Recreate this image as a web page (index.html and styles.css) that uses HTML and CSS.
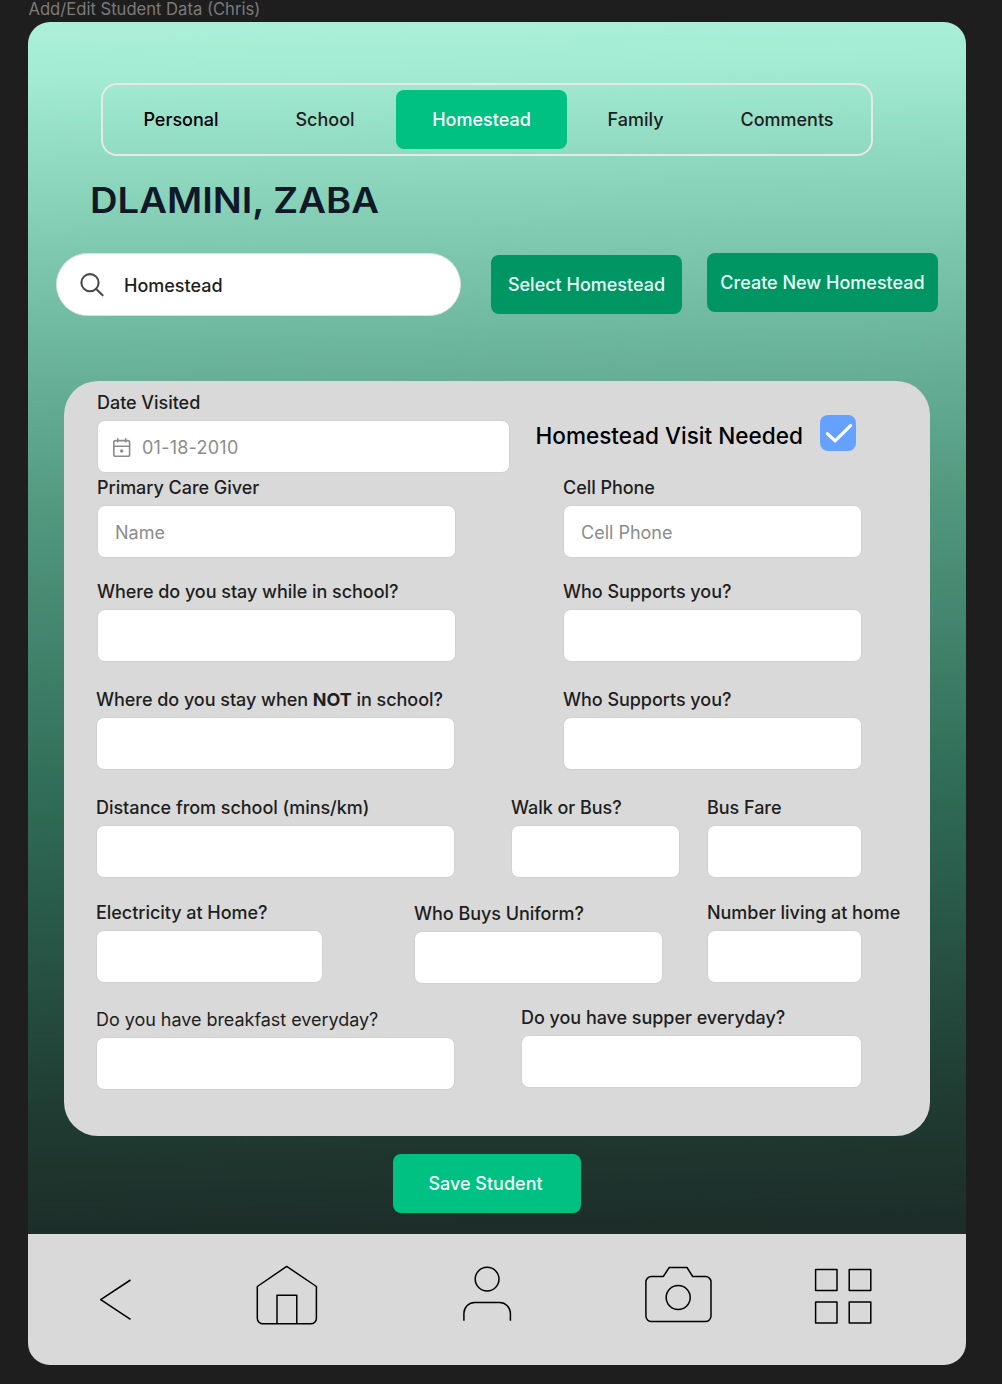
FILE: index.html
```html
<!DOCTYPE html>
<html lang="en">
<head>
<meta charset="utf-8">
<title>Add/Edit Student Data</title>
<link rel="stylesheet" href="styles.css">
</head>
<body>
<div class="frame-name"><span>Add/Edit Student Data (Chris)</span></div>
<div class="frame">
  <main class="content">
    <nav class="tabs">
      <a class="tab tab-first">Personal</a>
      <a class="tab tab-school">School</a>
      <a class="tab tab-active">Homestead</a>
      <a class="tab tab-family">Family</a>
      <a class="tab tab-comments">Comments</a>
    </nav>
    <h1 class="student"><span>DLAMINI, ZABA</span></h1>
    <div class="toolbar">
      <div class="search">
        <svg width="26" height="26" viewBox="0 0 26 26" fill="none" stroke="#4a4a4a" stroke-width="2.1" stroke-linecap="round"><circle cx="11" cy="10.7" r="8.6"/><path d="M17.2 16.9 23.6 23.3"/></svg>
        <span>Homestead</span>
      </div>
      <button class="btn btn-dark btn-select">Select Homestead</button>
      <button class="btn btn-dark btn-create">Create New Homestead</button>
    </div>
    <section class="panel">
      <div class="row row-date">
        <div class="field w-date"><label>Date Visited</label>
          <div class="input input-date">
            <svg width="20" height="22" viewBox="0 0 20 22" fill="none" stroke="#8c8c8c" stroke-width="1.6"><rect x="1.8" y="3.6" width="15.8" height="15.6" rx="1.8"/><path d="M1.8 9.3H17.6M5.8 1.2V5.6M13.7 1.2V5.6"/><circle cx="9.7" cy="14" r="1.7" fill="#8c8c8c" stroke="none"/></svg>
            <span>01-18-2010</span>
          </div>
        </div>
        <div class="visit">
          <span>Homestead Visit Needed</span>
          <div class="check"><svg width="36" height="36" viewBox="0 0 36 36" fill="none" stroke="#fff" stroke-width="3.2" stroke-linecap="round" stroke-linejoin="round"><path d="M7.4 18.6 15.1 25.9 30.6 10.6"/></svg></div>
        </div>
      </div>
      <div class="row row-giver">
        <div class="field w-wide"><label>Primary Care Giver</label><div class="input">Name</div></div>
        <div class="field w-half"><label>Cell Phone</label><div class="input">Cell Phone</div></div>
      </div>
      <div class="row row-stay">
        <div class="field w-wide"><label>Where do you stay while in school?</label><div class="input"></div></div>
        <div class="field w-half"><label>Who Supports you?</label><div class="input"></div></div>
      </div>
      <div class="row row-away">
        <div class="field w-wide"><label>Where do you stay when <b>NOT</b> in school?</label><div class="input"></div></div>
        <div class="field w-half"><label>Who Supports you?</label><div class="input"></div></div>
      </div>
      <div class="row row-travel">
        <div class="field w-wide"><label>Distance from school (mins/km)</label><div class="input"></div></div>
        <div class="field w-walk"><label>Walk or Bus?</label><div class="input"></div></div>
        <div class="field w-small"><label>Bus Fare</label><div class="input"></div></div>
      </div>
      <div class="row row-home">
        <div class="field w-power"><label>Electricity at Home?</label><div class="input"></div></div>
        <div class="field w-uniform"><label>Who Buys Uniform?</label><div class="input"></div></div>
        <div class="field w-small"><label>Number living at home</label><div class="input"></div></div>
      </div>
      <div class="row row-meals">
        <div class="field w-wide w-breakfast"><label class="light">Do you have breakfast everyday?</label><div class="input"></div></div>
        <div class="field w-supper"><label>Do you have supper everyday?</label><div class="input"></div></div>
      </div>
    </section>
    <button class="btn btn-save">Save Student</button>
  </main>
  <footer class="dock">
    <svg class="i-back" width="34" height="44" viewBox="0 0 34 44"><path d="M32.5 2 2.7 21.7 32.5 41.4"/></svg>
    <svg class="i-home" width="64" height="62" viewBox="0 0 64 62"><path d="M2.3 22.5 31.7 2.4 61.4 22.5V54.2a5.6 5.6 0 0 1-5.6 5.6H7.9a5.6 5.6 0 0 1-5.6-5.6ZM22 59.8V31.2H41.8V59.8"/></svg>
    <svg class="i-user" width="52" height="58" viewBox="0 0 52 58"><circle cx="26.1" cy="14.1" r="11.9"/><path d="M2.9 55.8V48.5A10.8 10.8 0 0 1 13.7 37.6H38.5A10.8 10.8 0 0 1 49.4 48.5V55.8"/></svg>
    <svg class="i-camera" width="70" height="60" viewBox="0 0 70 60"><path d="M7.5 11.5H19.3L25.2 2.5H43L48.7 11.5H61.4a5.6 5.6 0 0 1 5.6 5.6V51a5.6 5.6 0 0 1-5.6 5.6H7.5A5.6 5.6 0 0 1 1.9 51V17.1a5.6 5.6 0 0 1 5.6-5.6Z"/><circle cx="34.2" cy="32.5" r="12"/></svg>
    <svg class="i-grid" width="60" height="58" viewBox="0 0 60 58"><path d="M1.6 2.6H23V23.6H1.6ZM35.2 2.6H56.8V23.6H35.2ZM1.6 35H23V56H1.6ZM35.2 35H56.8V56H35.2Z"/></svg>
  </footer>
</div>
</body>
</html>
```
FILE: styles.css
```css
* { box-sizing: border-box; }
body {
  margin: 0;
  width: 1002px;
  height: 1384px;
  overflow: hidden;
  background: #1e1e1e;
  font-family: Inter, "Liberation Sans", sans-serif;
  font-size: 18px;
  color: #1e1e1e;
}
svg { display: block; flex: none; }
button { border: 0; font: inherit; padding: 0; }

.frame-name {
  height: 22px;
  padding-left: 28.5px;
  font-size: 16.6px;
  line-height: 19px;
  color: #7b7b7b;
}
.frame {
  display: flex;
  flex-direction: column;
  width: 938px;
  height: 1343px;
  margin-left: 28px;
  border-radius: 22px;
  overflow: hidden;
  background: linear-gradient(179deg, #abefd9 8px, #a4ecd4 50px, #7fcab1 222px, #64ad94 376px, #539a81 478px, #2f6b56 784px, #1f3a31 1102px, #1d2d29 1220px);
}
.content { height: 1212px; }

.tabs {
  display: flex;
  align-items: center;
  width: 772px;
  height: 73px;
  margin: 61px 0 0 73px;
  padding-left: 5px;
  gap: 6px;
  border: 2px solid #e8e8e8;
  border-radius: 16px;
  font-weight: 500;
}
.tab {
  width: 146px;
  height: 59px;
  border-radius: 8px;
  text-align: center;
  line-height: 60px;
  white-space: nowrap;
}
.tab-first { color: #000; }
.tab-school { width: 130px; }
.tab-active { width: 171px; background: #00c082; color: #fff; }
.tab-family { width: 125px; }
.tab-comments { width: 166px; }

.student {
  height: 46px;
  margin: 21px 0 0 62px;
  font-size: 35.2px;
  line-height: 46px;
  font-weight: 600;
  color: #111827;
}
.student span {
  display: inline-block;
  transform: scaleX(1.085);
  transform-origin: 0 50%;
}

.toolbar {
  display: flex;
  height: 64px;
  margin: 30px 0 0 28px;
}
.search {
  display: flex;
  align-items: center;
  width: 405px;
  height: 63px;
  padding-left: 22px;
  gap: 19px;
  border: 1px solid #dedede;
  border-radius: 32px;
  background: #fff;
  font-weight: 500;
}
.search span { padding-top: 1px; }
.btn {
  display: block;
  height: 59px;
  border-radius: 8px;
  color: #fff;
  font-weight: 500;
  line-height: 60px;
  white-space: nowrap;
}
.btn-dark { background: #009663; color: #e9fff7; }
.btn-select { width: 191px; margin: 2px 0 0 30px; padding-top: 1px; line-height: 58px; }
.btn-create { width: 231px; margin-left: 25px; }
.btn-save { width: 188px; margin: 18px 0 0 364.5px; padding-right: 2px; line-height: 59px; background: #00c082; color: #f0fff9; }

.panel {
  width: 866px;
  height: 755px;
  margin: 64px 0 0 36px;
  padding: 7px 0 0 32px;
  border-radius: 34px;
  background: #d9d9d9;
}
.row { display: flex; height: 85px; }
.field label {
  display: block;
  height: 27px;
  margin-bottom: 5px;
  line-height: 29px;
  font-weight: 500;
  letter-spacing: -0.04px;
  white-space: nowrap;
}
.field label b { font-weight: 700; }
.field label.light { font-weight: 400; }
.input {
  display: flex;
  align-items: center;
  height: 53px;
  padding: 2px 0 0 17px;
  border: 1px solid #d1d1d1;
  border-radius: 8px;
  background: #fff;
  color: #8c8c8c;
}
.input-date { padding-left: 14px; gap: 10px; letter-spacing: 0.24px; }
.row-date { padding-left: 1px; }
.row-giver, .row-stay { padding-left: 1px; gap: 107px; }
.row-away { margin-top: 23px; gap: 108px; }
.row-stay { margin-top: 19px; }
.row-travel { margin-top: 23px; gap: 27px; }
.row-travel .w-walk { margin-left: 29px; }
.row-home { margin-top: 20px; }
.row-meals { margin-top: 20px; gap: 66px; }
.w-date { width: 413px; }
.w-wide { width: 359px; }
.w-half { width: 299px; }
.w-walk { width: 169px; }
.w-small { width: 155px; }
.w-power { width: 227px; }
.w-uniform { width: 249px; margin: 1px 44px 0 91px; }
.w-breakfast { margin-top: 2px; }
.w-supper { width: 341px; }

.visit {
  display: flex;
  align-items: center;
  height: 36px;
  margin: 27px 0 0 25px;
  font-size: 22.55px;
  font-weight: 500;
  color: #000;
}
.visit span { width: 285px; white-space: nowrap; line-height: 36px; padding: 5px 0 0 0.5px; }
.check { width: 36px; height: 36px; border-radius: 8px; background: #65a1ff; }

.dock {
  display: flex;
  height: 131px;
  background: #d9d9d9;
}
.dock svg { fill: none; stroke: #000; stroke-width: 1.5; stroke-linejoin: round; }
.i-back { margin: 44px 0 0 70px; }
.i-home { margin: 30px 0 0 123px; }
.i-user { margin: 31px 0 0 142px; }
.i-camera { margin: 31px 0 0 131px; }
.i-grid { margin: 33px 0 0 100px; }
```
